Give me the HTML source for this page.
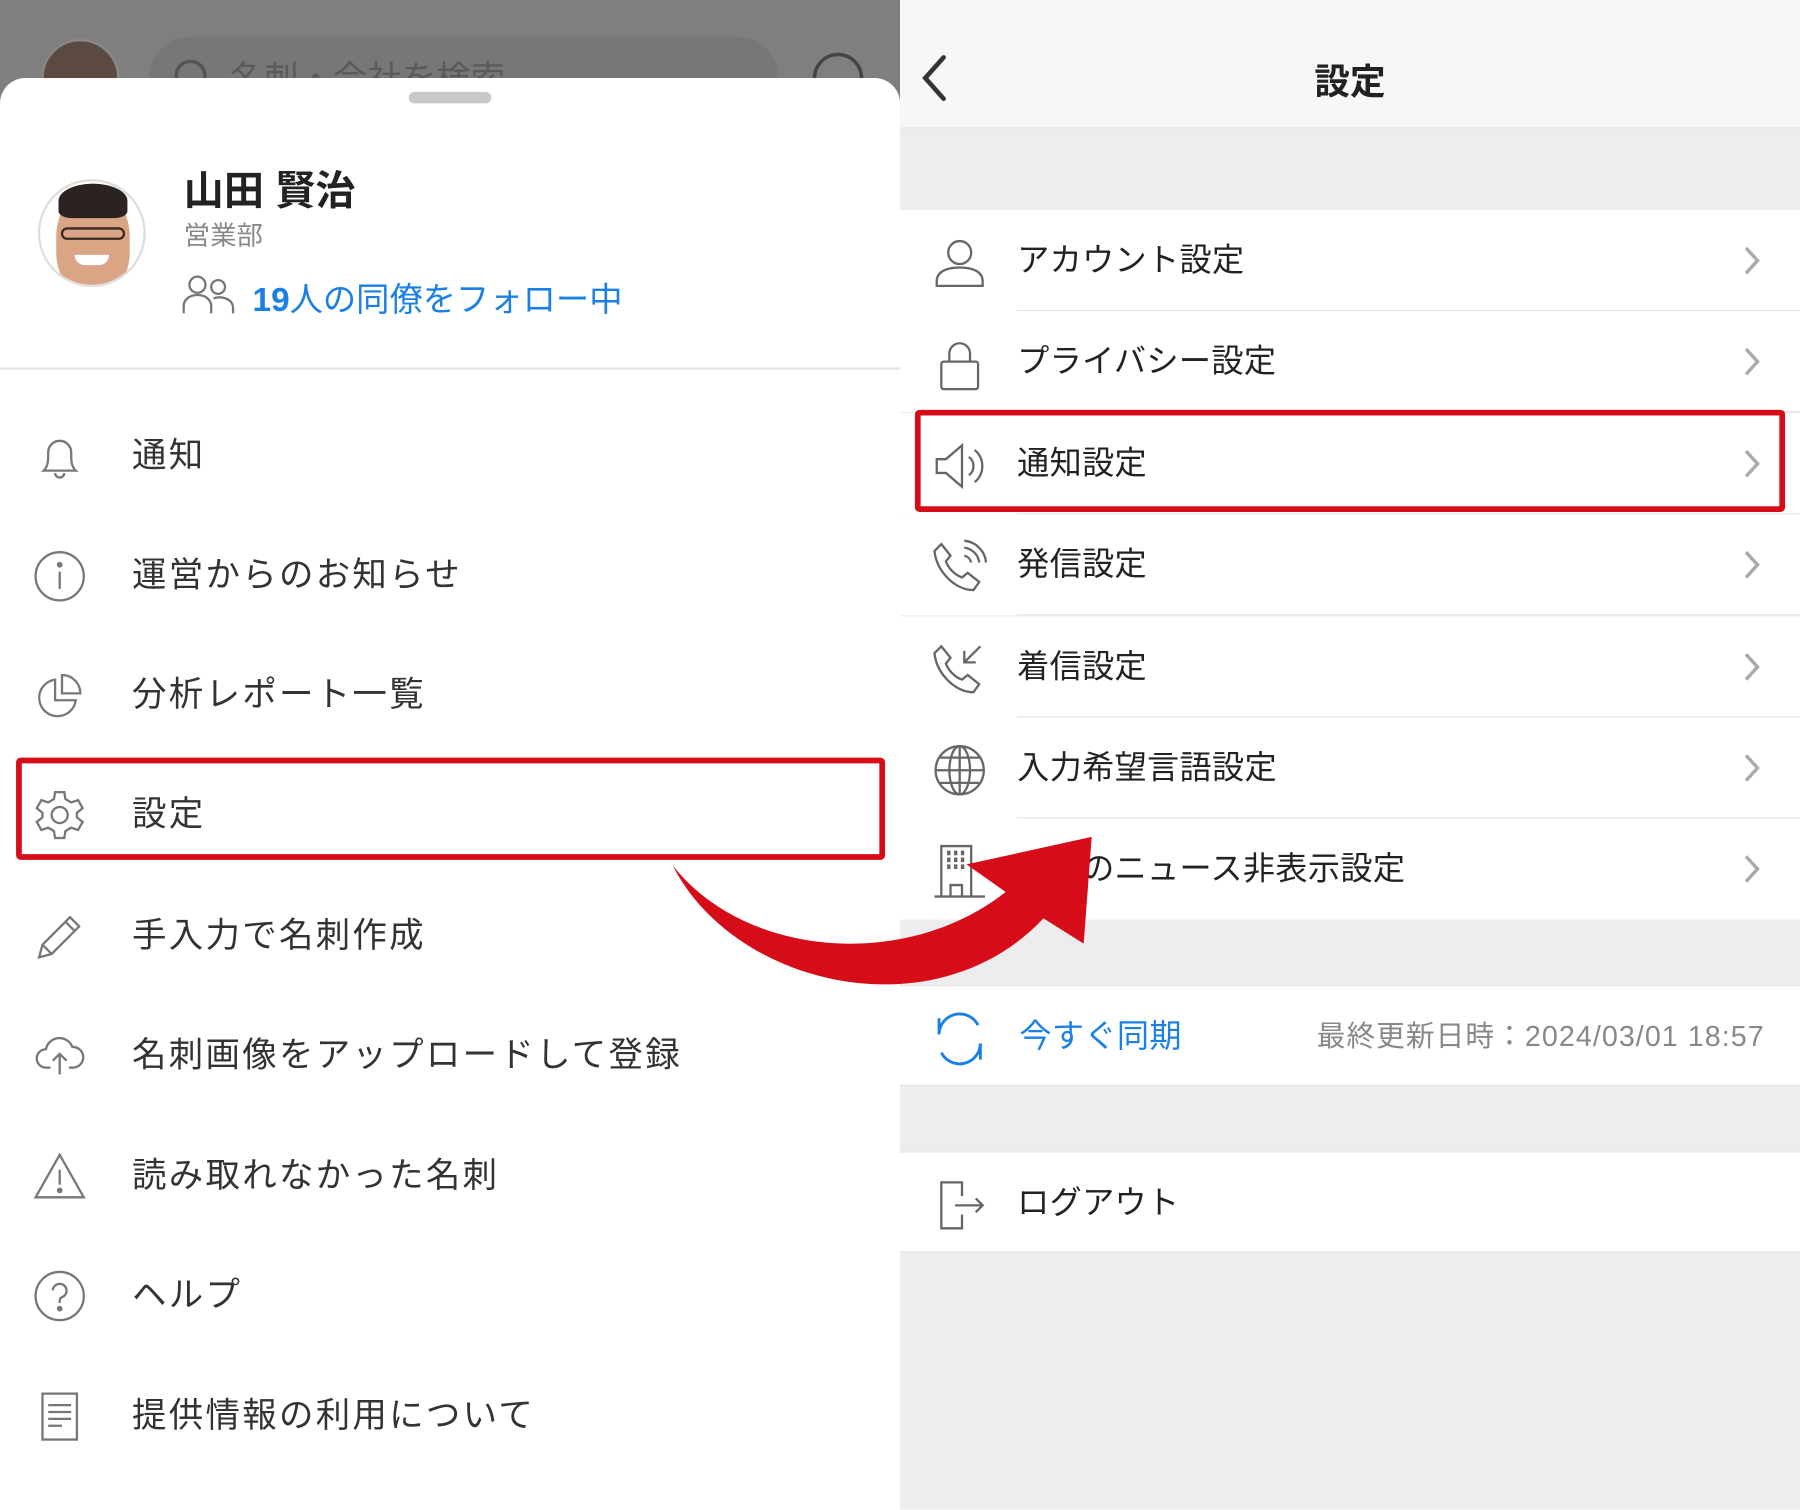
<!DOCTYPE html>
<html><head><meta charset="utf-8"><style>
*{margin:0;padding:0;box-sizing:border-box}
html,body{width:1800px;height:1509px;overflow:hidden;background:#fff}
#w{position:absolute;left:0;top:0;width:1568px;height:1315px;transform:scale(1.14796);transform-origin:0 0;font-family:"Liberation Sans","Noto Sans CJK JP",sans-serif;overflow:hidden}
.a{position:absolute}
.mi{position:absolute;left:115px;font-size:30px;color:#333;letter-spacing:2px;line-height:40px}
.ic{position:absolute;left:28px;width:48px;height:48px}
.row{position:absolute;left:784px;width:784px;height:88px;background:#fff}
.row .t{position:absolute;left:102px;top:24px;font-size:28px;color:#222;line-height:40px;letter-spacing:0.3px}
.row .sep{position:absolute;left:102px;right:0;bottom:0;height:1px;background:#e3e3e3}
.row svg.i{position:absolute;left:28px;top:22px;width:48px;height:48px}
.row svg.c{position:absolute;left:734px;top:30px;width:16px;height:28px}
</style></head><body><div id="w">
<div class="a" style="left:0;top:0;width:784px;height:120px;background:#7f7f7f"></div>
<div class="a" style="left:36px;top:34px;width:68px;height:68px;border-radius:50%;background:#5a4a40;border:2px solid #888"></div>
<div class="a" style="left:130px;top:32px;width:548px;height:70px;border-radius:35px;background:#777"></div>
<div class="a" style="left:152px;top:52px;width:28px;height:28px;border-radius:50%;border:3px solid #555"></div>
<div class="a" style="left:200px;top:44px;font-size:30px;color:#5a5a5a">名刺・会社を検索</div>
<div class="a" style="left:708px;top:46px;width:44px;height:44px;border-radius:50%;border:3px solid #444"></div>
<div class="a" style="left:0;top:68px;width:784px;height:1260px;background:#fff;border-radius:22px 22px 0 0"></div>
<div class="a" style="left:356px;top:80px;width:72px;height:10px;border-radius:5px;background:#c8c8c8"></div>
<div class="a" style="left:33px;top:156px;width:94px;height:94px;border-radius:50%;border:2px solid #ddd;background:#fff;overflow:hidden">
 <div class="a" style="left:14px;top:8px;width:64px;height:90px;border-radius:45% 45% 40% 40%;background:#d9a585"></div>
 <div class="a" style="left:16px;top:2px;width:60px;height:30px;border-radius:50% 50% 20% 20%;background:#2b2320"></div>
 <div class="a" style="left:18px;top:40px;width:56px;height:11px;border:2px solid #3a2a20;border-radius:6px"></div>
 <div class="a" style="left:30px;top:64px;width:30px;height:9px;border-radius:0 0 16px 16px;background:#fff"></div>
</div>
<div class="a" style="left:160px;top:138px;font-size:35px;font-weight:bold;color:#222">山田 賢治</div>
<div class="a" style="left:160px;top:186px;font-size:23px;color:#888">営業部</div>
<svg class="a" style="left:158px;top:238px" width="48" height="36" viewBox="0 0 48 36" fill="none" stroke="#777" stroke-width="2"><circle cx="14" cy="10" r="7"/><path d="M2 35v-6c0-6 5-10 12-10s12 4 12 10v6"/><circle cx="32" cy="12" r="6"/><path d="M28 22c2-1 3-1 5-1 7 0 12 4 12 9v5"/></svg>
<div class="a" style="left:220px;top:238px;font-size:29px;color:#1a80e5"><b>19</b>人の同僚をフォロー中</div>
<div class="a" style="left:0;top:320px;width:784px;height:2px;background:#e6e6e6"></div>
<svg class="ic" style="top:374px" viewBox="0 0 48 48" fill="none" stroke="#777" stroke-width="2"><path d="M10 36c4-4 4-8 4-16a10 10 0 0 1 20 0c0 8 0 12 4 16z"/><path d="M20 38a4 4 0 0 0 8 0"/></svg>
<div class="mi" style="top:378px">通知</div>
<svg class="ic" style="top:478px" viewBox="0 0 48 48" fill="none" stroke="#777" stroke-width="2"><circle cx="24" cy="24" r="21"/><path d="M24 20v15"/><circle cx="24" cy="14" r="1.5" fill="#777"/></svg>
<div class="mi" style="top:482px">運営からのお知らせ</div>
<svg class="ic" style="top:582px" viewBox="0 0 48 48" fill="none" stroke="#777" stroke-width="2"><path d="M20 10a16 16 0 1 0 18 18H20z"/><path d="M26 6v16h16A16 16 0 0 0 26 6z"/></svg>
<div class="mi" style="top:586px">分析レポート一覧</div>
<svg class="ic" style="top:686px" viewBox="0 0 48 48" fill="none" stroke="#777" stroke-width="2"><path d="M20 4h8l1 6 5 3 6-2 4 7-5 4v4l5 4-4 7-6-2-5 3-1 6h-8l-1-6-5-3-6 2-4-7 5-4v-4l-5-4 4-7 6 2 5-3z"/><circle cx="24" cy="24" r="7"/></svg>
<div class="mi" style="top:690px">設定</div>
<svg class="ic" style="top:792px" viewBox="0 0 48 48" fill="none" stroke="#777" stroke-width="2"><path d="M6 42l3-11L33 7l8 8-24 24z"/><path d="M29 11l8 8M9 31l8 8"/></svg>
<div class="mi" style="top:796px">手入力で名刺作成</div>
<svg class="ic" style="top:896px" viewBox="0 0 48 48" fill="none" stroke="#777" stroke-width="2"><path d="M16 34h-4a8 8 0 0 1 0-16 12 12 0 0 1 23-2 8 8 0 0 1 1 18h-4"/><path d="M24 40V22M18 28l6-6 6 6"/></svg>
<div class="mi" style="top:900px">名刺画像をアップロードして登録</div>
<svg class="ic" style="top:1001px" viewBox="0 0 48 48" fill="none" stroke="#777" stroke-width="2"><path d="M24 5L3 42h42z"/><path d="M24 18v13"/><circle cx="24" cy="36" r="1.5" fill="#777"/></svg>
<div class="mi" style="top:1005px">読み取れなかった名刺</div>
<svg class="ic" style="top:1105px" viewBox="0 0 48 48" fill="none" stroke="#777" stroke-width="2"><circle cx="24" cy="24" r="21"/><path d="M18 19a6 6 0 1 1 8 6c-2 1-2 2-2 5"/><circle cx="24" cy="35" r="1.5" fill="#777"/></svg>
<div class="mi" style="top:1109px">ヘルプ</div>
<svg class="ic" style="top:1210px" viewBox="0 0 48 48" fill="none" stroke="#777" stroke-width="2"><rect x="9" y="4" width="30" height="40"/><path d="M14 14h20M14 20h20M14 26h20M14 32h12"/></svg>
<div class="mi" style="top:1214px">提供情報の利用について</div>
<div class="a" style="left:14px;top:660px;width:757px;height:89px;border:5px solid #d70c19;border-radius:4px"></div>
<div class="a" style="left:784px;top:0;width:784px;height:1315px;background:#ededed"></div>
<div class="a" style="left:784px;top:0;width:784px;height:112px;background:#f7f7f7;border-bottom:1px solid #e3e3e3"></div>
<svg class="a" style="left:800px;top:46px" width="30" height="44" viewBox="0 0 30 44" fill="none" stroke="#333" stroke-width="4" stroke-linecap="round"><path d="M22 4L6 22l16 18"/></svg>
<div class="a" style="left:784px;top:46px;width:784px;text-align:center;font-size:31px;font-weight:bold;color:#222">設定</div>
<div class="row" style="top:183px"><svg class="i" viewBox="0 0 48 48" fill="none" stroke="#666" stroke-width="2"><circle cx="24" cy="15" r="10"/><path d="M4 44v-4c0-8 8-12 20-12s20 4 20 12v4z"/></svg><div class="t">アカウント設定</div><svg class="c" viewBox="0 0 16 28" fill="none" stroke="#aaa" stroke-width="3"><path d="M3 3l10 11-10 11"/></svg><div class="sep"></div></div>
<div class="row" style="top:271px"><svg class="i" viewBox="0 0 48 48" fill="none" stroke="#666" stroke-width="2"><rect x="8" y="22" width="32" height="24" rx="2"/><path d="M15 22v-7a9 9 0 0 1 18 0v7"/></svg><div class="t">プライバシー設定</div><svg class="c" viewBox="0 0 16 28" fill="none" stroke="#aaa" stroke-width="3"><path d="M3 3l10 11-10 11"/></svg><div class="sep"></div></div>
<div class="row" style="top:360px"><svg class="i" viewBox="0 0 48 48" fill="none" stroke="#666" stroke-width="2"><path d="M4 18h8l14-12v36L12 30H4z"/><path d="M32 16a10 10 0 0 1 0 16M37 10a18 18 0 0 1 0 28"/></svg><div class="t">通知設定</div><svg class="c" viewBox="0 0 16 28" fill="none" stroke="#aaa" stroke-width="3"><path d="M3 3l10 11-10 11"/></svg><div class="sep"></div></div>
<div class="row" style="top:448px"><svg class="i" viewBox="0 0 48 48" fill="none" stroke="#666" stroke-width="2"><path d="M8 4l8 10-4 5c2 6 8 12 14 14l5-4 10 8-5 7C20 44 4 28 2 10z"/><path d="M28 14a8 8 0 0 1 6 6M28 7a15 15 0 0 1 13 13M28 1a21 21 0 0 1 19 19"/></svg><div class="t">発信設定</div><svg class="c" viewBox="0 0 16 28" fill="none" stroke="#aaa" stroke-width="3"><path d="M3 3l10 11-10 11"/></svg><div class="sep"></div></div>
<div class="row" style="top:537px"><svg class="i" viewBox="0 0 48 48" fill="none" stroke="#666" stroke-width="2"><path d="M8 4l8 10-4 5c2 6 8 12 14 14l5-4 10 8-5 7C20 44 4 28 2 10z"/><path d="M42 4L28 18M28 8v10h10"/></svg><div class="t">着信設定</div><svg class="c" viewBox="0 0 16 28" fill="none" stroke="#aaa" stroke-width="3"><path d="M3 3l10 11-10 11"/></svg><div class="sep"></div></div>
<div class="row" style="top:625px"><svg class="i" viewBox="0 0 48 48" fill="none" stroke="#666" stroke-width="2"><circle cx="24" cy="24" r="21"/><ellipse cx="24" cy="24" rx="9" ry="21"/><path d="M3 24h42M24 3v42M7 13h34M7 35h34"/></svg><div class="t">入力希望言語設定</div><svg class="c" viewBox="0 0 16 28" fill="none" stroke="#aaa" stroke-width="3"><path d="M3 3l10 11-10 11"/></svg><div class="sep"></div></div>
<div class="row" style="top:713px"><svg class="i" viewBox="0 0 48 48" fill="none" stroke="#666" stroke-width="2"><path d="M8 46V2h26v44M2 46h44M16 46V36h10v10"/><path d="M13 8h3M19 8h3M25 8h3M13 14h3M19 14h3M25 14h3M13 20h3M19 20h3M25 20h3" stroke-width="4"/></svg><div class="t">企業のニュース非表示設定</div><svg class="c" viewBox="0 0 16 28" fill="none" stroke="#aaa" stroke-width="3"><path d="M3 3l10 11-10 11"/></svg></div>
<div class="row" style="top:858px;border-top:1px solid #e3e3e3;border-bottom:1px solid #e3e3e3"><svg class="i" viewBox="0 0 48 48" fill="none" stroke="#1a80e5" stroke-width="2.5"><path d="M6 20A18 18 0 0 1 40 12M42 28A18 18 0 0 1 8 36"/><path d="M6 6v14h0M42 42V28"/></svg><div class="t" style="left:104px;color:#1a80e5">今すぐ同期</div><div class="t" style="left:363px;color:#888;font-size:25px;letter-spacing:0.9px">最終更新日時：2024/03/01 18:57</div></div>
<div class="row" style="top:1003px;border-top:1px solid #e3e3e3;border-bottom:1px solid #e3e3e3"><svg class="i" viewBox="0 0 48 48" fill="none" stroke="#666" stroke-width="2"><path d="M26 16V4H8v40h18V32"/><path d="M20 24h24M38 18l6 6-6 6"/></svg><div class="t">ログアウト</div></div>
<div class="a" style="left:797px;top:357px;width:758px;height:89px;border:5px solid #d70c19;border-radius:4px"></div>
<svg class="a" style="left:0;top:0" width="1568" height="1315"><path d="M586 754 C640 860 815 900 909 800 L944 822 L951 729 L842 753 L876 777 C790 845 650 835 586 754 Z" fill="#d70c19"/></svg>
</div></body></html>
